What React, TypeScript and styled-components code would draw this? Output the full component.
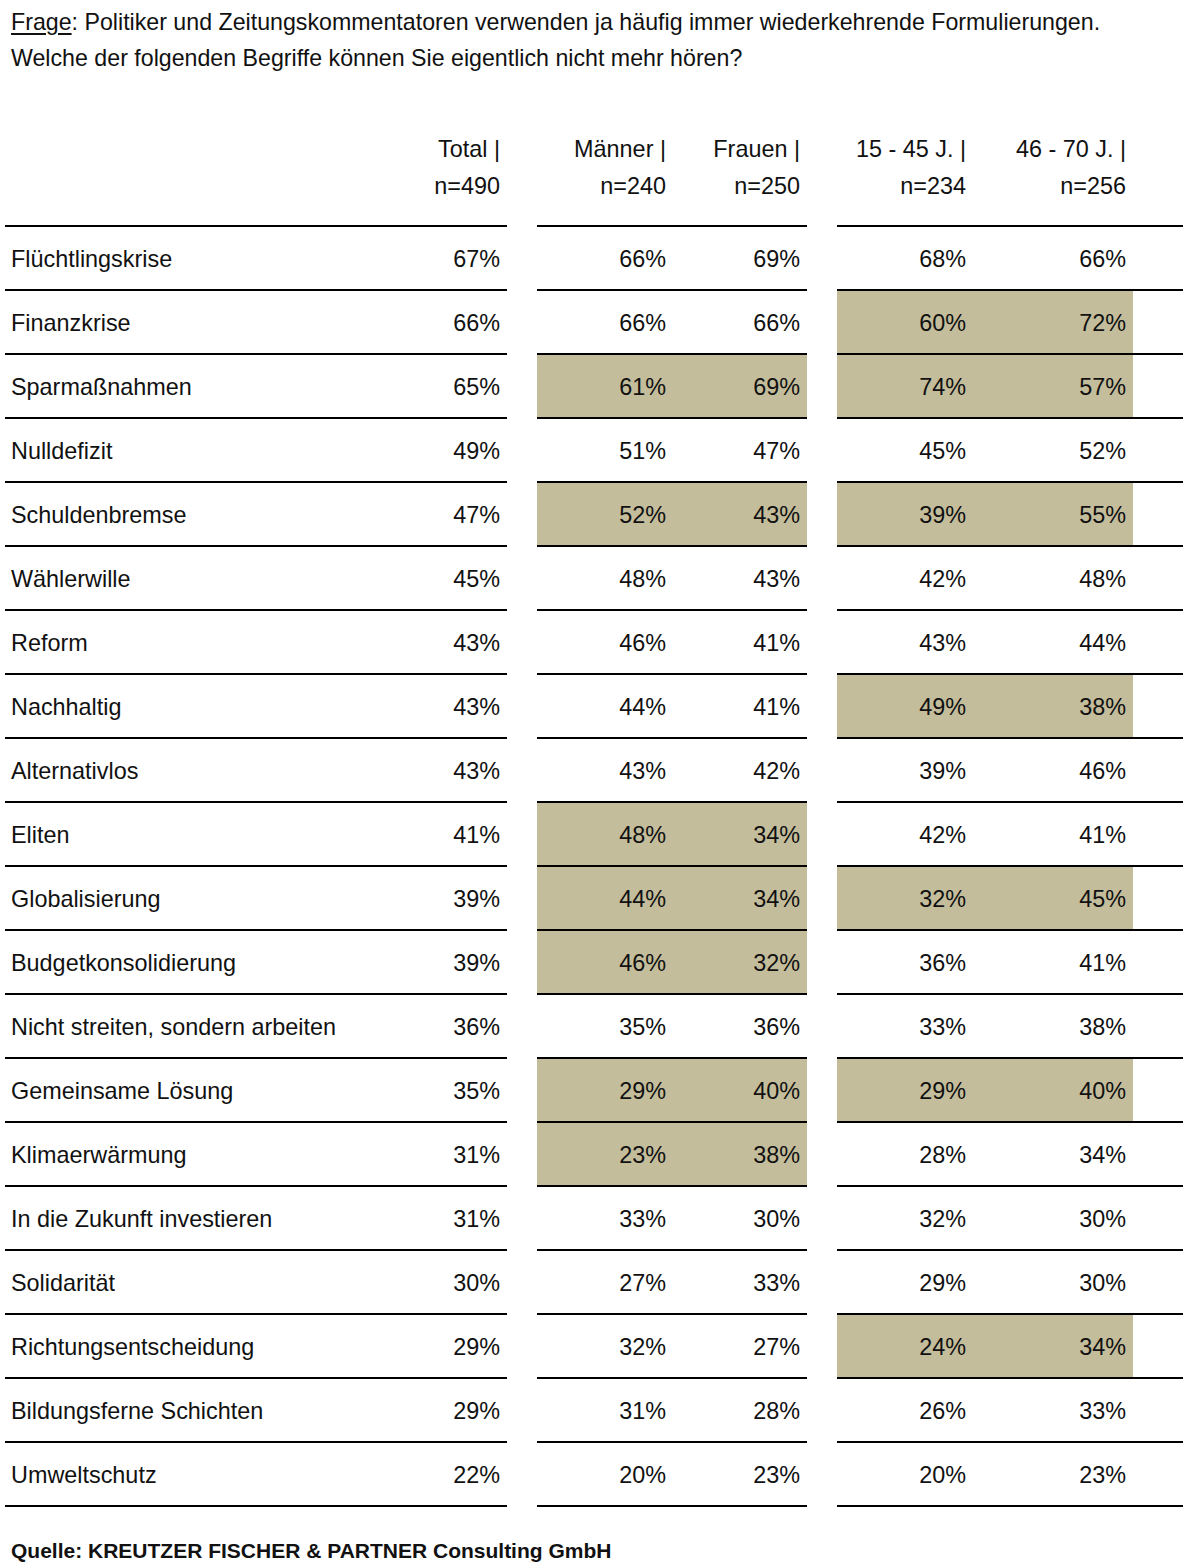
import React from "react";
import styled, { createGlobalStyle, css } from "styled-components";

const Global = createGlobalStyle`
  html, body { margin: 0; padding: 0; background: #ffffff; }
  body { font-family: "Liberation Sans", Arial, sans-serif; color: #111; }
`;

const COLS = "415px 87px 30px 136px 134px 30px 136px 160px 50px";
const HL = "#c4bd9b";

const Page = styled.div`
  width: 1197px;
  padding: 4px 0 10px 5px;
  box-sizing: border-box;
`;

const Title = styled.div`
  padding-left: 6px;
  font-size: 23.2px;
  line-height: 36px;
`;

const U = styled.span`
  text-decoration: underline;
  text-underline-offset: 3px;
  text-decoration-thickness: 1.5px;
`;

const Table = styled.div`
  margin-top: 55px;
  display: flex;
  flex-direction: column;
`;

const GridRow = styled.div`
  display: grid;
  grid-template-columns: ${COLS};
`;

const HeadCell = styled.div<{ $ruled?: boolean }>`
  text-align: right;
  padding: 0 7px 20px 0;
  font-size: 23.4px;
  line-height: 37px;
  ${(p) => p.$ruled && css`border-bottom: 2px solid #000;`}
`;

const Cell = styled.div<{ $ruled?: boolean; $hl?: boolean; $left?: boolean }>`
  height: 64px;
  box-sizing: border-box;
  display: flex;
  align-items: center;
  justify-content: ${(p) => (p.$left ? "flex-start" : "flex-end")};
  padding: ${(p) => (p.$left ? "3px 0 0 6px" : "3px 7px 0 0")};
  font-size: 23.4px;
  ${(p) => p.$ruled && css`border-bottom: 2px solid #000;`}
  ${(p) => p.$hl && css`background: ${HL};`}
`;

const Gap = styled.div``;

const Footer = styled.div`
  margin-top: 29px;
  padding-left: 6px;
  font-size: 21px;
  font-weight: 700;
  line-height: 30px;
`;

type Row = { label: string; v: string[]; g: boolean; a: boolean };

const rows: Row[] = [
  { label: "Flüchtlingskrise", v: ["67%", "66%", "69%", "68%", "66%"], g: false, a: false },
  { label: "Finanzkrise", v: ["66%", "66%", "66%", "60%", "72%"], g: false, a: true },
  { label: "Sparmaßnahmen", v: ["65%", "61%", "69%", "74%", "57%"], g: true, a: true },
  { label: "Nulldefizit", v: ["49%", "51%", "47%", "45%", "52%"], g: false, a: false },
  { label: "Schuldenbremse", v: ["47%", "52%", "43%", "39%", "55%"], g: true, a: true },
  { label: "Wählerwille", v: ["45%", "48%", "43%", "42%", "48%"], g: false, a: false },
  { label: "Reform", v: ["43%", "46%", "41%", "43%", "44%"], g: false, a: false },
  { label: "Nachhaltig", v: ["43%", "44%", "41%", "49%", "38%"], g: false, a: true },
  { label: "Alternativlos", v: ["43%", "43%", "42%", "39%", "46%"], g: false, a: false },
  { label: "Eliten", v: ["41%", "48%", "34%", "42%", "41%"], g: true, a: false },
  { label: "Globalisierung", v: ["39%", "44%", "34%", "32%", "45%"], g: true, a: true },
  { label: "Budgetkonsolidierung", v: ["39%", "46%", "32%", "36%", "41%"], g: true, a: false },
  { label: "Nicht streiten, sondern arbeiten", v: ["36%", "35%", "36%", "33%", "38%"], g: false, a: false },
  { label: "Gemeinsame Lösung", v: ["35%", "29%", "40%", "29%", "40%"], g: true, a: true },
  { label: "Klimaerwärmung", v: ["31%", "23%", "38%", "28%", "34%"], g: true, a: false },
  { label: "In die Zukunft investieren", v: ["31%", "33%", "30%", "32%", "30%"], g: false, a: false },
  { label: "Solidarität", v: ["30%", "27%", "33%", "29%", "30%"], g: false, a: false },
  { label: "Richtungsentscheidung", v: ["29%", "32%", "27%", "24%", "34%"], g: false, a: true },
  { label: "Bildungsferne Schichten", v: ["29%", "31%", "28%", "26%", "33%"], g: false, a: false },
  { label: "Umweltschutz", v: ["22%", "20%", "23%", "20%", "23%"], g: false, a: false },
];

const heads: [string, string][] = [
  ["Total |", "n=490"],
  ["Männer |", "n=240"],
  ["Frauen |", "n=250"],
  ["15 - 45 J. |", "n=234"],
  ["46 - 70 J. |", "n=256"],
];

const Head = ({ h }: { h: [string, string] }) => (
  <>
    {h[0]}
    <br />
    {h[1]}
  </>
);

export default function App() {
  return (
    <Page>
      <Global />
      <Title>
        <U>Frage</U>: Politiker und Zeitungskommentatoren verwenden ja häufig immer wiederkehrende Formulierungen.
        <br />
        Welche der folgenden Begriffe können Sie eigentlich nicht mehr hören?
      </Title>
      <Table>
        <GridRow>
          <HeadCell $ruled />
          <HeadCell $ruled><Head h={heads[0]} /></HeadCell>
          <Gap />
          <HeadCell $ruled><Head h={heads[1]} /></HeadCell>
          <HeadCell $ruled><Head h={heads[2]} /></HeadCell>
          <Gap />
          <HeadCell $ruled><Head h={heads[3]} /></HeadCell>
          <HeadCell $ruled><Head h={heads[4]} /></HeadCell>
          <HeadCell $ruled />
        </GridRow>
        {rows.map((r) => (
          <GridRow key={r.label}>
            <Cell $ruled $left>{r.label}</Cell>
            <Cell $ruled>{r.v[0]}</Cell>
            <Gap />
            <Cell $ruled $hl={r.g}>{r.v[1]}</Cell>
            <Cell $ruled $hl={r.g}>{r.v[2]}</Cell>
            <Gap />
            <Cell $ruled $hl={r.a}>{r.v[3]}</Cell>
            <Cell $ruled $hl={r.a}>{r.v[4]}</Cell>
            <Cell $ruled />
          </GridRow>
        ))}
      </Table>
      <Footer>Quelle: KREUTZER FISCHER &amp; PARTNER Consulting GmbH</Footer>
    </Page>
  );
}
